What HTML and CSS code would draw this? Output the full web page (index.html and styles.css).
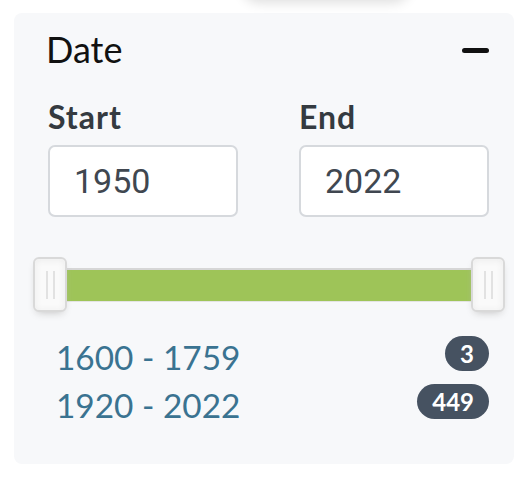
FILE: index.html
```html
<!DOCTYPE html>
<html lang="en">
<head>
<meta charset="utf-8">
<title>Date filter</title>
<link rel="stylesheet" href="styles.css">
</head>
<body>
<div class="floating"></div>
<section class="panel">
  <header class="panel-head">
    <h2 class="panel-title">Date</h2>
    <button class="collapse" aria-label="Collapse"><span class="minus"></span></button>
  </header>
  <div class="fields">
    <label class="field">
      <span class="field-label">Start</span>
      <input class="field-input" type="text" value="1950">
    </label>
    <label class="field">
      <span class="field-label">End</span>
      <input class="field-input" type="text" value="2022">
    </label>
  </div>
  <div class="slider">
    <div class="handle"></div>
    <div class="connect"></div>
    <div class="handle"></div>
  </div>
  <ul class="ranges">
    <li class="range"><a class="range-link" href="#">1600 - 1759</a><span class="badge">3</span></li>
    <li class="range"><a class="range-link" href="#">1920 - 2022</a><span class="badge">449</span></li>
  </ul>
</section>
</body>
</html>
```
FILE: styles.css
```css
html, body {
  margin: 0;
  padding: 0;
  background: #ffffff;
}
body {
  position: relative;
  width: 532px;
  height: 478px;
  overflow: hidden;
  font-family: "Lato", "Noto Sans", sans-serif;
}
.floating {
  position: absolute;
  left: 242px;
  top: -34px;
  width: 168px;
  height: 34px;
  border-radius: 17px;
  background: #ffffff;
  box-shadow: 0 3px 12px rgba(0, 0, 0, 0.13);
}
.panel {
  box-sizing: border-box;
  margin: 13px 0 0 14px;
  width: 500px;
  height: 451px;
  background: #f7f8fa;
  border-radius: 8px;
  padding: 14px 25px 0 34px;
}
.panel-head {
  display: flex;
  align-items: center;
  justify-content: space-between;
  height: 44px;
  margin-bottom: 26px;
}
.panel-title {
  margin: 0 0 0 -2px;
  font-size: 36px;
  line-height: 44px;
  font-weight: 400;
  color: #111111;
}
.collapse {
  border: 0;
  padding: 0;
  background: transparent;
  display: flex;
  align-items: center;
  margin-top: 2px;
}
.minus {
  display: block;
  width: 27px;
  height: 5px;
  border-radius: 3px;
  background: #111111;
}
.fields {
  display: grid;
  grid-template-columns: 1fr 1fr;
  column-gap: 61px;
}
.field {
  display: flex;
  flex-direction: column;
  gap: 8px;
}
.field-label {
  font-size: 32px;
  line-height: 40px;
  font-weight: 700;
  letter-spacing: 1px;
  color: #343a40;
}
.field-input {
  box-sizing: border-box;
  width: 100%;
  height: 72px;
  border: 2px solid #d6d9dd;
  border-radius: 7px;
  background: #ffffff;
  padding: 0 24px;
  font-family: "Roboto", "Open Sans", sans-serif;
  font-size: 34px;
  color: #404750;
  outline: none;
}
.slider {
  display: flex;
  align-items: center;
  height: 55px;
  margin: 40px -16px 0 -15px;
}
.handle {
  box-sizing: border-box;
  position: relative;
  flex: 0 0 34px;
  height: 55px;
  border: 2px solid #d9d9d9;
  border-radius: 6px;
  background: #fafafa;
  box-shadow: inset 0 0 1px #fff, inset 0 1px 7px #ebebeb, 0 4px 8px -4px #bbbbbb;
  z-index: 1;
}
.handle::before,
.handle::after {
  content: "";
  position: absolute;
  top: 12px;
  width: 2px;
  height: 28px;
  background: #e2e2e2;
}
.handle::before { left: 11px; }
.handle::after { left: 18px; }
.connect {
  flex: 1;
  height: 34px;
  box-sizing: border-box;
  background: #9ec458;
  border-top: 2px solid #d6d6d6;
  border-bottom: 1px solid #e4e4e4;
}
.ranges {
  list-style: none;
  margin: 21px 0 0 8px;
  padding: 0;
}
.range {
  display: flex;
  align-items: center;
  justify-content: space-between;
  height: 48px;
}
.range-link {
  font-size: 33.4px;
  line-height: 48px;
  color: #3a7391;
  text-decoration: none;
}
.badge {
  display: inline-flex;
  align-items: center;
  justify-content: center;
  height: 35px;
  margin-bottom: 7px;
  padding: 0 15px;
  border-radius: 18px;
  background: #465261;
  color: #ffffff;
  font-size: 24px;
  font-weight: 700;
  line-height: 1;
}
```
